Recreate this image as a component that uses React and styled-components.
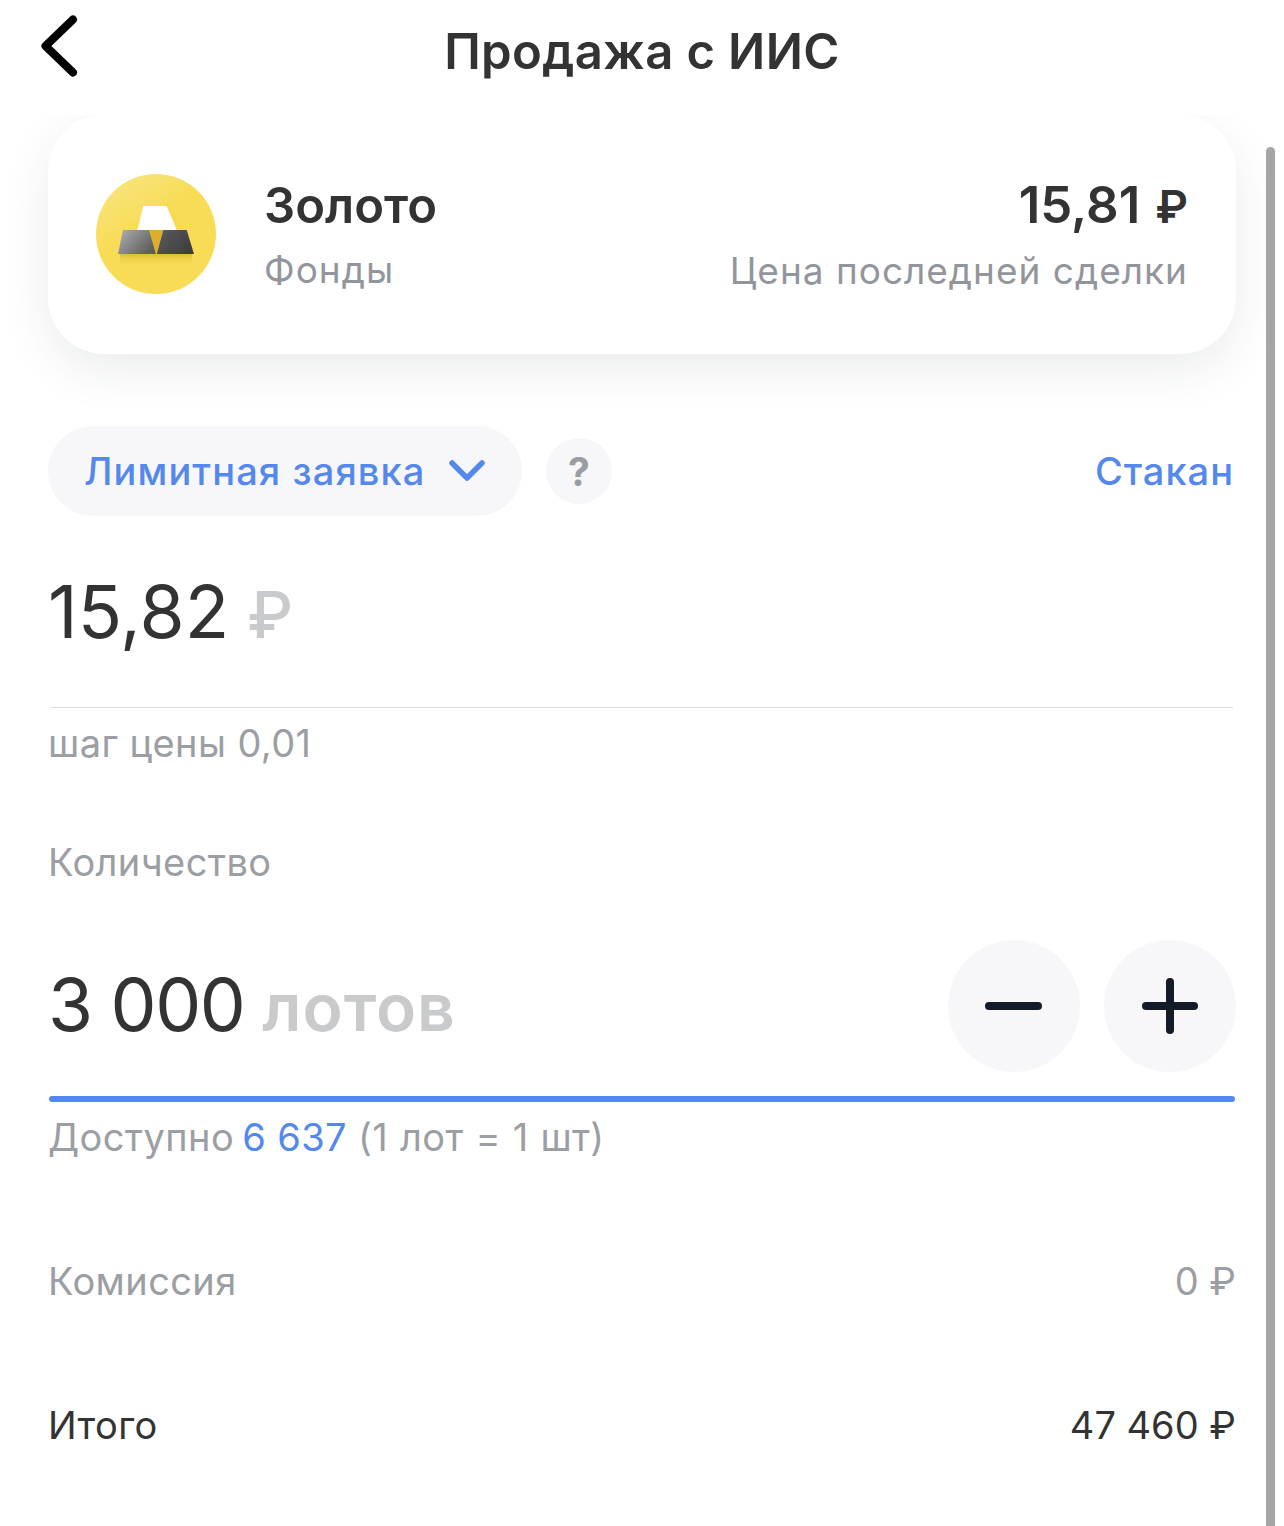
import styled, { createGlobalStyle } from "styled-components"

const Global = createGlobalStyle`
	html, body {
		margin: 0;
		background: #fff;
	}
	body {
		font-family: Inter, "Noto Sans", "Liberation Sans", sans-serif;
		color: #333;
	}
`

function GoldIcon() {
	return (
		<svg width='120' height='120' viewBox='0 0 120 120'>
			<defs>
				<linearGradient id='coin' x1='0.15' y1='0.05' x2='0.7' y2='0.9'>
					<stop offset='0' stopColor='#f8e47e' />
					<stop offset='0.45' stopColor='#f8dc56' />
					<stop offset='1' stopColor='#f9dc55' />
				</linearGradient>
				<linearGradient id='barLeft' x1='0' y1='0' x2='1' y2='0.6'>
					<stop offset='0' stopColor='#b0b0b0' />
					<stop offset='1' stopColor='#5e5e5e' />
				</linearGradient>
				<linearGradient id='barRight' x1='0' y1='0' x2='1' y2='0.6'>
					<stop offset='0' stopColor='#5c5c5c' />
					<stop offset='1' stopColor='#3f3f3f' />
				</linearGradient>
				<linearGradient id='glow' x1='0' y1='0' x2='0' y2='1'>
					<stop offset='0' stopColor='#c9a21e' stopOpacity='0.55' />
					<stop offset='1' stopColor='#e8c93f' stopOpacity='0' />
				</linearGradient>
			</defs>
			<circle cx='60' cy='60' r='60' fill='url(#coin)' />
			<rect x='24' y='80' width='72' height='11' fill='url(#glow)' />
			<polygon points='47.3,32 70.7,32 80.7,56 41.3,56' fill='#fff' />
			<polygon points='53,56 67.3,56 60.2,80' fill='#dcae2c' />
			<polygon points='27,56 53,56 60,80 22,80' fill='url(#barLeft)' />
			<polygon points='67.3,56 90.7,56 98,80 60.7,80' fill='url(#barRight)' />
		</svg>
	)
}

export default function App() {
	return (
		<Page>
			<Global />
			<Header>
				<BackButton>
					<svg width='40' height='64' viewBox='0 0 40 64' fill='none'>
						<path
							d='M33 5.500 L5.500 32 L33 58.500'
							stroke='#000'
							strokeWidth='8'
							strokeLinecap='round'
							strokeLinejoin='round'
						/>
					</svg>
				</BackButton>
				<Title>Продажа с ИИС</Title>
			</Header>
			<Scrollbar />
			<Content>
				<Card>
					<CoinWrap>
						<GoldIcon />
					</CoinWrap>
					<CardColumn>
						<CardTitle>Золото</CardTitle>
						<CardHint>Фонды</CardHint>
					</CardColumn>
					<CardColumn $right>
						<CardPrice>
							15,81<CardRuble>₽</CardRuble>
						</CardPrice>
						<CardHint>Цена последней сделки</CardHint>
					</CardColumn>
				</Card>

				<OrderRow>
					<OrderPill>
						<span>Лимитная заявка</span>
						<svg width='38' height='24' viewBox='0 0 38 24' fill='none'>
							<path
								d='M4 4 L19 19 L34 4'
								stroke='#5488ec'
								strokeWidth='5.500'
								strokeLinecap='round'
								strokeLinejoin='round'
							/>
						</svg>
					</OrderPill>
					<HelpButton>?</HelpButton>
					<BookLink>Стакан</BookLink>
				</OrderRow>

				<PriceValue>
					15,82<Unit>₽</Unit>
				</PriceValue>
				<Divider />
				<Note>шаг цены 0,01</Note>

				<QuantityLabel>Количество</QuantityLabel>
				<QuantityRow>
					<QuantityValue>
						3 000<Unit $bold>лотов</Unit>
					</QuantityValue>
					<Steppers>
						<StepButton>
							<svg width='60' height='60' viewBox='0 0 60 60'>
								<rect x='1' y='26' width='57' height='8' rx='4' fill='#141b28' />
							</svg>
						</StepButton>
						<StepButton>
							<svg width='60' height='60' viewBox='0 0 60 60'>
								<rect x='2' y='26' width='56' height='8' rx='4' fill='#141b28' />
								<rect x='26' y='2' width='8' height='56' rx='4' fill='#141b28' />
							</svg>
						</StepButton>
					</Steppers>
				</QuantityRow>
				<ActiveLine />
				<Note>
					Доступно <Accent>6 637</Accent> <Tail>(1 лот = 1 шт)</Tail>
				</Note>

				<SummaryRow>
					<span>Комиссия</span>
					<Amount>0 ₽</Amount>
				</SummaryRow>
				<SummaryRow $dark>
					<span>Итого</span>
					<Amount>47 460 ₽</Amount>
				</SummaryRow>
			</Content>
		</Page>
	)
}

const Page = styled.div`
	position: relative;
	width: 1284px;
	height: 1526px;
	overflow: hidden;
	background: #fff;
`

const Header = styled.header`
	height: 115px;
	position: relative;
	display: flex;
	justify-content: center;
	padding-top: 20px;
	box-sizing: border-box;
	background: #fff;
	z-index: 1;
`

const BackButton = styled.div`
	position: absolute;
	left: 40px;
	top: 14px;
	line-height: 0;
`

const Title = styled.h1`
	margin: 0;
	font-size: 49px;
	line-height: 64px;
	font-weight: 600;
	letter-spacing: 0.4px;
	color: #333;
`

const Scrollbar = styled.div`
	position: absolute;
	left: 1266px;
	top: 147px;
	width: 9px;
	height: 1400px;
	border-radius: 5px;
	background: #a5a5a5;
`

const Content = styled.main`
	padding: 0 48px;
	width: 1188px;
`

const Card = styled.section`
	height: 239px;
	padding: 0 48px;
	box-sizing: border-box;
	display: flex;
	align-items: center;
	background: #fff;
	border-radius: 56px;
	box-shadow: 0 16px 48px rgba(30, 40, 60, 0.09);
`

const CoinWrap = styled.div`
	width: 120px;
	height: 120px;
	margin-right: 48px;
	margin-bottom: 2px;
	line-height: 0;
`

const CardColumn = styled.div`
	display: flex;
	flex-direction: column;
	gap: 15px;
	padding-top: 6px;
	align-items: ${(p) => (p.$right ? "flex-end" : "flex-start")};
	margin-left: ${(p) => (p.$right ? "auto" : "0")};
`

const CardTitle = styled.div`
	font-size: 49px;
	line-height: 50px;
	font-weight: 600;
	color: #333;
`

const CardPrice = styled(CardTitle)`
	font-size: 51px;
`

const CardRuble = styled.span`
	margin-left: 15px;
	font-size: 45px;
`

const CardHint = styled.div`
	font-size: 37px;
	line-height: 48px;
	letter-spacing: 1px;
	color: #92969c;
`

const OrderRow = styled.div`
	display: flex;
	align-items: center;
	margin-top: 72px;
`

const OrderPill = styled.div`
	width: 474px;
	height: 90px;
	box-sizing: border-box;
	padding: 0 36px;
	display: flex;
	align-items: center;
	justify-content: space-between;
	border-radius: 45px;
	background: #f7f7f9;
	font-size: 38px;
	font-weight: 500;
	letter-spacing: 1.1px;
	color: #5488ec;
`

const HelpButton = styled.div`
	width: 66px;
	height: 66px;
	margin-left: 24px;
	border-radius: 50%;
	background: #f7f7f9;
	display: flex;
	align-items: center;
	justify-content: center;
	font-size: 39px;
	font-weight: 700;
	color: #9a9da2;
`

const BookLink = styled.div`
	margin-left: auto;
	margin-right: 2px;
	font-size: 38px;
	font-weight: 500;
	letter-spacing: 1px;
	color: #5488ec;
`

const PriceValue = styled.div`
	margin-top: 51px;
	height: 90px;
	font-size: 73px;
	line-height: 90px;
	color: #333;
`

const Unit = styled.span`
	margin-left: ${(p) => (p.$bold ? "18px" : "18px")};
	color: #c8cacc;
	font-weight: ${(p) => (p.$bold ? 600 : 500)};
	font-size: ${(p) => (p.$bold ? "66px" : "64px")};
	letter-spacing: ${(p) => (p.$bold ? "1px" : "0")};
`

const Divider = styled.div`
	margin: 50px 3px 0;
	height: 1px;
	background: #dcdcdc;
`

const Note = styled.div`
	margin-top: 11px;
	font-size: 38px;
	line-height: 48px;
	letter-spacing: 0.4px;
	color: #9b9ea3;
`

const Accent = styled.span`
	margin-left: -3px;
	color: #5488ec;
`

const Tail = styled.span`
	word-spacing: 0.75px;
`

const QuantityLabel = styled(Note)`
	margin-top: 71px;
`

const QuantityRow = styled.div`
	display: flex;
	align-items: center;
	justify-content: space-between;
	margin-top: 54px;
	height: 132px;
`

const QuantityValue = styled.div`
	font-size: 73px;
	line-height: 90px;
	letter-spacing: -1.5px;
	color: #333;
`

const Steppers = styled.div`
	display: flex;
	gap: 24px;
`

const StepButton = styled.div`
	width: 132px;
	height: 132px;
	border-radius: 50%;
	background: #f7f7f9;
	display: flex;
	align-items: center;
	justify-content: center;
`

const ActiveLine = styled.div`
	margin: 24px 1px 0;
	height: 6px;
	border-radius: 3px;
	background: #5488ec;
`

const SummaryRow = styled.div`
	display: flex;
	justify-content: space-between;
	margin-top: 96px;
	font-size: 38px;
	line-height: 48px;
	letter-spacing: 0.4px;
	color: ${(p) => (p.$dark ? "#333" : "#9b9ea3")};
`

const Amount = styled.span`
	letter-spacing: 0;
`
